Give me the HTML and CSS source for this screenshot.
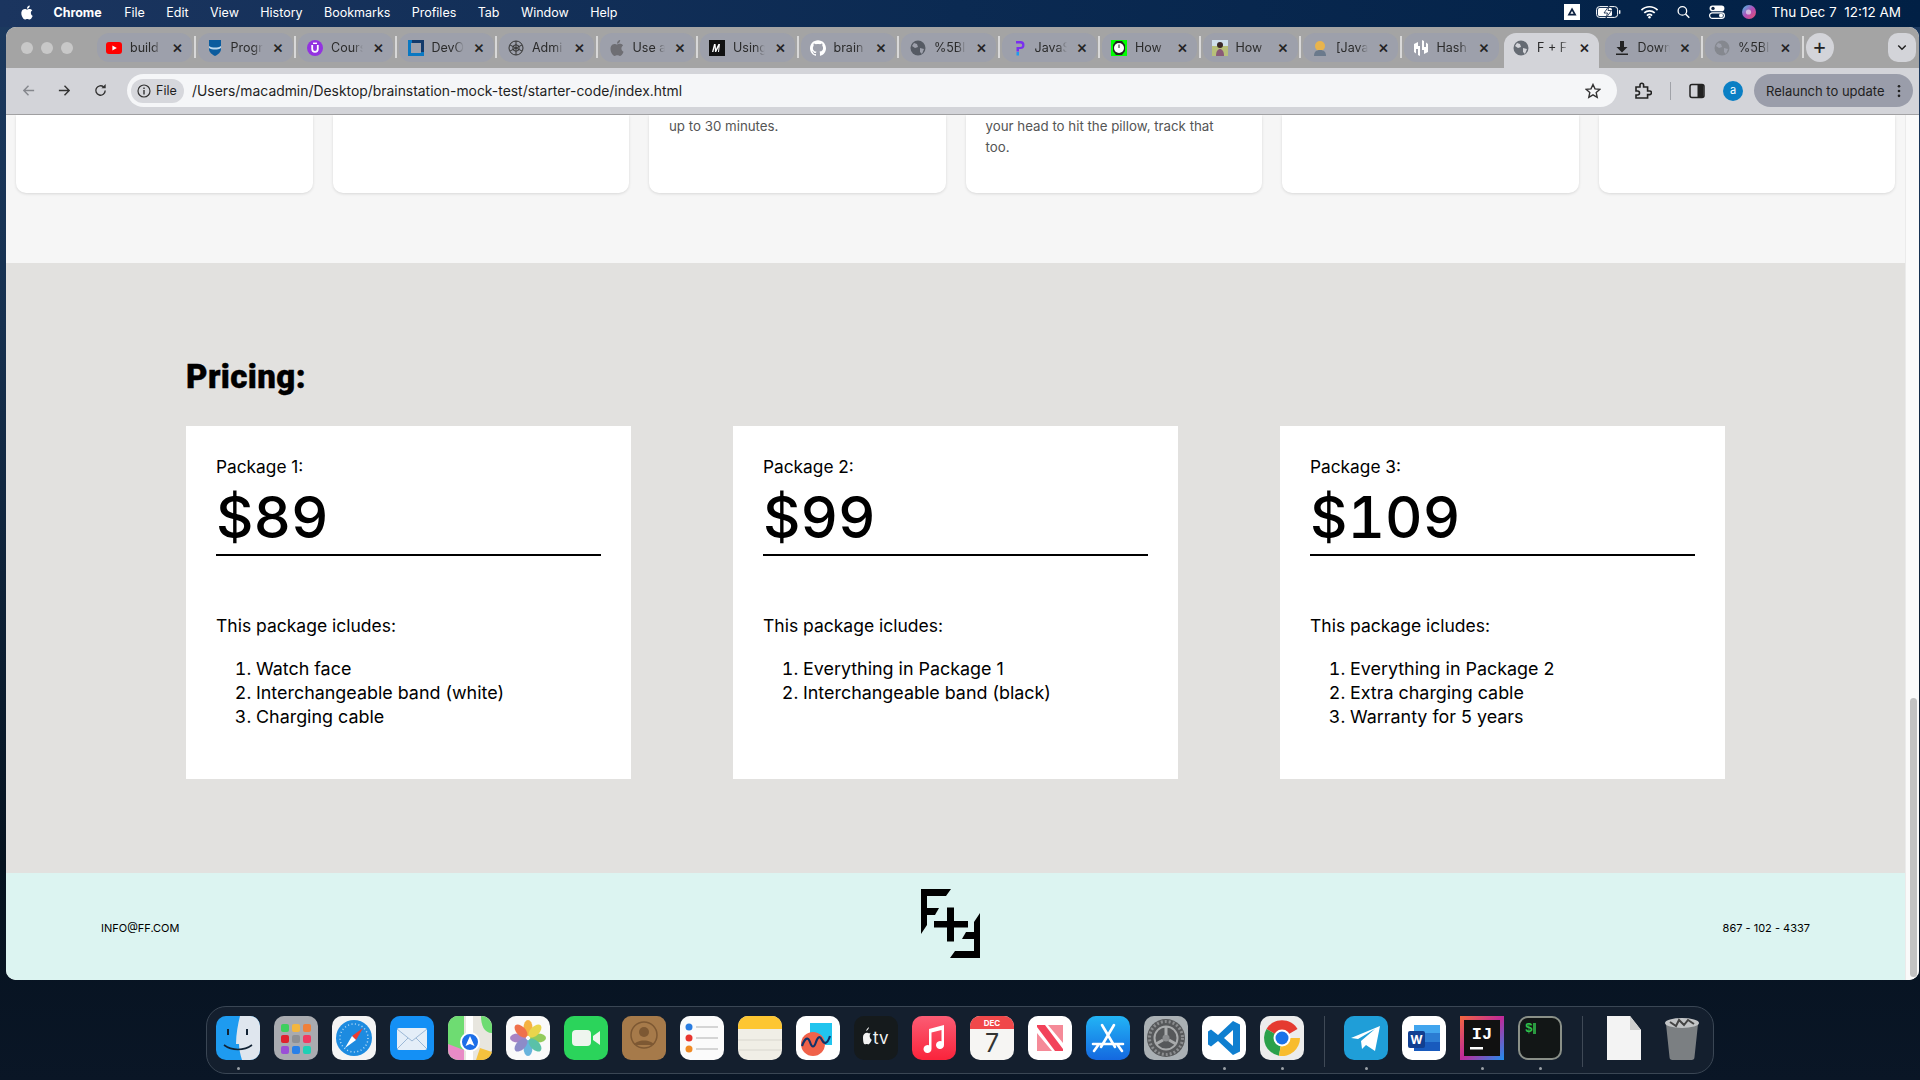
FILE: index.html
```html
<!DOCTYPE html>
<html lang="en">
<head>
    <meta charset="UTF-8">
    <meta name="viewport" content="width=device-width, initial-scale=1.0">
    <title>F + F</title>
    <link rel="stylesheet" href="styles.css">
</head>
<body>
    <!-- mac menu bar -->
    <header class="menubar">
        <div class="menu-left">
            <svg class="apple" viewBox="0 0 24 24"><path fill="#fff" d="M12.152 6.896c-.948 0-2.415-1.078-3.96-1.04-2.04.027-3.91 1.183-4.961 3.014-2.117 3.675-.546 9.103 1.519 12.09 1.013 1.454 2.208 3.09 3.792 3.039 1.52-.065 2.09-.987 3.935-.987 1.831 0 2.35.987 3.96.948 1.637-.026 2.676-1.48 3.676-2.948 1.156-1.688 1.636-3.325 1.662-3.415-.039-.013-3.182-1.221-3.22-4.857-.026-3.04 2.48-4.494 2.597-4.559-1.429-2.09-3.623-2.324-4.39-2.376-2-.156-3.675 1.09-4.61 1.09zM15.53 3.83c.843-1.012 1.4-2.427 1.245-3.83-1.207.052-2.662.805-3.532 1.818-.78.896-1.454 2.338-1.273 3.714 1.338.104 2.715-.688 3.559-1.701"/></svg>
            <span class="menu-app">Chrome</span>
            <span>File</span><span>Edit</span><span>View</span><span>History</span><span>Bookmarks</span><span>Profiles</span><span>Tab</span><span>Window</span><span>Help</span>
        </div>
        <div class="menu-right">
            <svg class="st-drive" viewBox="0 0 16 16"><rect width="16" height="16" fill="#fff"/><path d="M8 3.5l4.5 8h-9z" fill="#0a1f3f"/><path d="M8 7l1.6 2.8H6.4z" fill="#fff"/></svg>
            <svg class="st-batt" viewBox="0 0 25 12"><rect x=".6" y=".6" width="21" height="10.8" rx="3" fill="none" stroke="#fff" stroke-width="1"/><rect x="2" y="2" width="14" height="8" rx="1.5" fill="#fff"/><rect x="23" y="4" width="1.4" height="4" rx=".7" fill="#fff"/><path d="M13 0l-5 7h3.5L10 12l5.5-7.5H12z" fill="#fff" stroke="#0a2040" stroke-width=".8"/></svg>
            <svg class="st-wifi" viewBox="0 0 20 14"><path d="M1.5 5a12 12 0 0 1 17 0M4.5 8a8 8 0 0 1 11 0M7.3 10.8a4 4 0 0 1 5.4 0" fill="none" stroke="#fff" stroke-width="1.8"/><circle cx="10" cy="12.6" r="1.3" fill="#fff"/></svg>
            <svg class="st-search" viewBox="0 0 14 14"><circle cx="5.8" cy="5.8" r="4.6" fill="none" stroke="#fff" stroke-width="1.4"/><path d="M9.2 9.2l4 4" stroke="#fff" stroke-width="1.6"/></svg>
            <svg class="st-ctrl" viewBox="0 0 16 14"><rect x=".6" y=".6" width="14.8" height="5.6" rx="2.8" fill="#fff"/><circle cx="4" cy="3.4" r="1.7" fill="#0a2040"/><rect x=".6" y="7.8" width="14.8" height="5.6" rx="2.8" fill="none" stroke="#fff" stroke-width="1.2"/><circle cx="12" cy="10.6" r="2" fill="#fff"/></svg>
            <svg class="st-siri" viewBox="0 0 14 14"><defs><linearGradient id="siri" x1="0" y1="0" x2="1" y2="1"><stop offset="0" stop-color="#3fc4e8"/><stop offset=".5" stop-color="#b04fb8"/><stop offset="1" stop-color="#e8506a"/></linearGradient></defs><circle cx="7" cy="7" r="7" fill="url(#siri)"/><circle cx="6.5" cy="7" r="2.6" fill="#e5e0ee" opacity=".7"/></svg>
            <span class="clock">Thu Dec 7&nbsp;&nbsp;12:12 AM</span>
        </div>
    </header>

    <div class="window">
        <div class="tabstrip">
            <div class="lights"><i></i><i></i><i></i></div>
            <div class="tab"><svg class="fav" viewBox="0 0 16 16"><rect y="2" width="16" height="12" rx="3" fill="#f00"/><path d="M6.4 5.4v5.2L10.8 8z" fill="#fff"/></svg><span class="tab-title">build</span><b class="close">×</b></div>
            <i class="sep"></i>
            <div class="tab"><svg class="fav" viewBox="0 0 16 16"><path d="M2 0h12v9c0 3.5-3 5.5-6 7-3-1.5-6-3.500-6-7z" fill="#0b5c9e"/><path d="M2 6c3 2 9 2 12 0v2c-3 2-9 2-12 0z" fill="#bcd7ec"/></svg><span class="tab-title">Progr</span><b class="close">×</b></div>
            <i class="sep"></i>
            <div class="tab"><svg class="fav" viewBox="0 0 16 16"><circle cx="8" cy="8" r="8" fill="#9333e0"/><path d="M5.2 5v4a2.8 2.8 0 0 0 5.6 0V5" fill="none" stroke="#fff" stroke-width="1.8"/><rect x="6" y="2.6" width="4" height="1.4" fill="#fff"/></svg><span class="tab-title">Cours</span><b class="close">×</b></div>
            <i class="sep"></i>
            <div class="tab"><svg class="fav" viewBox="0 0 16 16"><rect width="16" height="16" fill="#0a78c2"/><rect x="4" y="0" width="12" height="3" fill="#123a6b"/><rect x="13" width="3" height="12" fill="#123a6b"/><rect x="3" y="3" width="10" height="10" fill="#9da0ab"/></svg><span class="tab-title">DevO</span><b class="close">×</b></div>
            <i class="sep"></i>
            <div class="tab"><svg class="fav" viewBox="0 0 16 16"><g fill="none" stroke="#333" stroke-width="1"><circle cx="8" cy="8" r="7"/><path d="M8 1v14M2 5l12 6M14 5L2 11"/><circle cx="8" cy="8" r="3.2"/></g></svg><span class="tab-title">Admi</span><b class="close">×</b></div>
            <i class="sep"></i>
            <div class="tab"><svg class="fav" viewBox="0 0 24 24"><path fill="#6e6e73" d="M12.152 6.896c-.948 0-2.415-1.078-3.96-1.04-2.04.027-3.91 1.183-4.961 3.014-2.117 3.675-.546 9.103 1.519 12.09 1.013 1.454 2.208 3.09 3.792 3.039 1.52-.065 2.09-.987 3.935-.987 1.831 0 2.35.987 3.96.948 1.637-.026 2.676-1.48 3.676-2.948 1.156-1.688 1.636-3.325 1.662-3.415-.039-.013-3.182-1.221-3.22-4.857-.026-3.04 2.48-4.494 2.597-4.559-1.429-2.09-3.623-2.324-4.39-2.376-2-.156-3.675 1.09-4.61 1.09zM15.53 3.83c.843-1.012 1.4-2.427 1.245-3.83-1.207.052-2.662.805-3.532 1.818-.78.896-1.454 2.338-1.273 3.714 1.338.104 2.715-.688 3.559-1.701"/></svg><span class="tab-title">Use a</span><b class="close">×</b></div>
            <i class="sep"></i>
            <div class="tab"><svg class="fav" viewBox="0 0 16 16"><rect width="16" height="16" fill="#111"/><path d="M3 12l2-8h1.6l.4 5 2.4-5H11l-1 8H9l.6-5-2.4 5H6l-.4-5-1.2 5z" fill="#fff"/></svg><span class="tab-title">Using</span><b class="close">×</b></div>
            <i class="sep"></i>
            <div class="tab"><svg class="fav" viewBox="0 0 24 24"><path fill="#fff" d="M12 .297c-6.63 0-12 5.373-12 12 0 5.303 3.438 9.8 8.205 11.385.6.113.82-.258.82-.577 0-.285-.01-1.04-.015-2.04-3.338.724-4.042-1.61-4.042-1.61C4.422 18.07 3.633 17.7 3.633 17.7c-1.087-.744.084-.729.084-.729 1.205.084 1.838 1.236 1.838 1.236 1.07 1.835 2.809 1.305 3.495.998.108-.776.417-1.305.76-1.605-2.665-.3-5.466-1.332-5.466-5.93 0-1.31.465-2.38 1.235-3.22-.135-.303-.54-1.523.105-3.176 0 0 1.005-.322 3.3 1.23.96-.267 1.98-.399 3-.405 1.02.006 2.04.138 3 .405 2.28-1.552 3.285-1.23 3.285-1.23.645 1.653.24 2.873.12 3.176.765.84 1.23 1.91 1.23 3.22 0 4.61-2.805 5.625-5.475 5.92.42.36.81 1.096.81 2.22 0 1.606-.015 2.896-.015 3.286 0 .315.21.69.825.57C20.565 22.092 24 17.592 24 12.297c0-6.627-5.373-12-12-12"/></svg><span class="tab-title">brain</span><b class="close">×</b></div>
            <i class="sep"></i>
            <div class="tab"><svg class="fav" viewBox="0 0 16 16"><circle cx="8" cy="8" r="7.5" fill="#555a63"/><path d="M4 3l3 1 1 3-3 1-3-2zM10 8l4 1-2 5-2-2z" fill="#9da0ab"/></svg><span class="tab-title">%5BI</span><b class="close">×</b></div>
            <i class="sep"></i>
            <div class="tab"><svg class="fav" viewBox="0 0 16 16"><path d="M5 1h4.5a4 4 0 0 1 0 8H8v2.500H5.500V7h4a1.500 1.500 0 0 0 0-3.500H5z" fill="#7a2ff0"/><rect x="5.5" y="12" width="2.5" height="3.5" fill="#1d9bf0"/></svg><span class="tab-title">JavaS</span><b class="close">×</b></div>
            <i class="sep"></i>
            <div class="tab"><svg class="fav" viewBox="0 0 16 16"><rect width="16" height="16" fill="#0f0"/><path d="M5 1h6l3 4v6l-3 4H5l-3-4V5z" fill="#222"/><circle cx="8" cy="8" r="5" fill="#fff"/><path d="M8 4.5V8" stroke="#222" stroke-width="1"/></svg><span class="tab-title">How</span><b class="close">×</b></div>
            <i class="sep"></i>
            <div class="tab"><svg class="fav" viewBox="0 0 16 16"><rect width="16" height="16" fill="#b7c07a"/><rect width="16" height="6" fill="#cfe0ea"/><circle cx="8" cy="5" r="3" fill="#3a2a28"/><path d="M4 16c0-5 2-7 4-7s4 2 4 7z" fill="#8a5a78"/></svg><span class="tab-title">How</span><b class="close">×</b></div>
            <i class="sep"></i>
            <div class="tab"><svg class="fav" viewBox="0 0 16 16"><circle cx="8" cy="6" r="5" fill="#e9b44c"/><path d="M2 16c0-4 2-6 6-6s6 2 6 6z" fill="#6b7a8c"/></svg><span class="tab-title">[Java</span><b class="close">×</b></div>
            <i class="sep"></i>
            <div class="tab"><svg class="fav" viewBox="0 0 16 16"><path d="M7 0v6H5V2L1 4v8l2 1.500V9h2v6l2 1zM9 0l2 1v6h2V2.500l2 1.500v8l-4 2v-4H9V16z" fill="#fff"/></svg><span class="tab-title">Hash</span><b class="close">×</b></div>
            <i class="sep sep-off"></i>
            <div class="tab tab-active"><svg class="fav" viewBox="0 0 16 16"><circle cx="8" cy="8" r="7.5" fill="#656b73"/><path d="M4 3l3 1 1 3-3 1-3-2zM10 8l4 1-2 5-2-2z" fill="#d3d4d9"/></svg><span class="tab-title">F + F</span><b class="close">×</b></div>
            <i class="sep sep-off"></i>
            <div class="tab"><svg class="fav" viewBox="0 0 16 16"><path d="M6 1h4v6h3.5L8 12.500 2.500 7H6zM2 13.500h12V15H2z" fill="#222"/></svg><span class="tab-title">Down</span><b class="close">×</b></div>
            <i class="sep"></i>
            <div class="tab"><svg class="fav" viewBox="0 0 16 16"><circle cx="8" cy="8" r="7.5" fill="#85888f"/><path d="M4 3l3 1 1 3-3 1-3-2zM10 8l4 1-2 5-2-2z" fill="#9da0ab"/></svg><span class="tab-title">%5BI</span><b class="close">×</b></div>
            <i class="sep"></i>
            <div class="newtab">+</div>
            <div class="tab-list"><svg viewBox="0 0 12 8"><path d="M1.5 1.5L6 6l4.5-4.5" fill="none" stroke="#222" stroke-width="1.8"/></svg></div>
        </div>

        <div class="toolbar">
            <svg class="nav" viewBox="0 0 16 16"><path d="M14 8H3M8 3L3 8l5 5" fill="none" stroke="#85878d" stroke-width="1.5"/></svg>
            <svg class="nav" viewBox="0 0 16 16"><path d="M2 8h11M8 3l5 5-5 5" fill="none" stroke="#333" stroke-width="1.5"/></svg>
            <svg class="nav" viewBox="0 0 16 16"><path d="M13 8a5 5 0 1 1-1.600-3.700" fill="none" stroke="#333" stroke-width="1.5"/><path d="M13.500 1v4.500H9z" fill="#333"/></svg>
            <div class="omnibox">
                <div class="chip"><svg class="info" viewBox="0 0 14 14"><circle cx="7" cy="7" r="6" fill="none" stroke="#333" stroke-width="1.2"/><rect x="6.3" y="6" width="1.4" height="4.5" fill="#333"/><rect x="6.3" y="3.5" width="1.4" height="1.5" fill="#333"/></svg>File</div>
                <span class="url">/Users/macadmin/Desktop/brainstation-mock-test/starter-code/index.html</span>
                <svg class="star" viewBox="0 0 16 16"><path d="M8 1.500l2 4.400 4.800.5-3.600 3.200 1 4.700L8 11.900l-4.200 2.400 1-4.700L1.200 6.400 6 5.900z" fill="none" stroke="#333" stroke-width="1.4"/></svg>
            </div>
            <svg class="tool tool-ext" viewBox="0 0 18 18"><path d="M2 5h4V3a1.800 1.800 0 0 1 3.600 0v2h4v4h2a1.800 1.800 0 0 1 0 3.600h-2V16H2v-3h1.500a2 2 0 0 0 0-4H2z" fill="none" stroke="#222" stroke-width="1.6"/></svg>
            <i class="tool-sep"></i>
            <svg class="tool tool-side" viewBox="0 0 16 16"><rect x="1" y="1.5" width="14" height="13" rx="2" fill="none" stroke="#222" stroke-width="1.5"/><rect x="8.5" y="2" width="6" height="12" fill="#222"/></svg>
            <div class="avatar">a</div>
            <div class="relaunch">Relaunch to update<svg class="dots" viewBox="0 0 4 16"><circle cx="2" cy="2.5" r="1.5"/><circle cx="2" cy="8" r="1.5"/><circle cx="2" cy="13.5" r="1.5"/></svg></div>
        </div>

        <div class="viewport">
            <main class="page">
                <section class="features">
                    <div class="feature"></div>
                    <div class="feature"></div>
                    <div class="feature"><p>up to 30 minutes.</p></div>
                    <div class="feature"><p>your head to hit the pillow, track that too.</p></div>
                    <div class="feature"></div>
                    <div class="feature"></div>
                </section>

                <section class="pricing">
                    <h2>Pricing:</h2>
                    <div class="packages">
                        <div class="package">
                            <p class="package-name">Package 1:</p>
                            <p class="package-price">$89</p>
                            <p class="package-intro">This package icludes:</p>
                            <ol>
                                <li>Watch face</li>
                                <li>Interchangeable band (white)</li>
                                <li>Charging cable</li>
                            </ol>
                        </div>
                        <div class="package">
                            <p class="package-name">Package 2:</p>
                            <p class="package-price">$99</p>
                            <p class="package-intro">This package icludes:</p>
                            <ol>
                                <li>Everything in Package 1</li>
                                <li>Interchangeable band (black)</li>
                            </ol>
                        </div>
                        <div class="package">
                            <p class="package-name">Package 3:</p>
                            <p class="package-price">$109</p>
                            <p class="package-intro">This package icludes:</p>
                            <ol>
                                <li>Everything in Package 2</li>
                                <li>Extra charging cable</li>
                                <li>Warranty for 5 years</li>
                            </ol>
                        </div>
                    </div>
                </section>

                <footer class="footer">
                    <span>INFO@FF.COM</span>
                    <svg class="logo" viewBox="0 0 59 69">
                        <path d="M0 0h30l-5 7H6v29l-6 9z"/>
                        <path d="M6 19h12l-4 7H6z"/>
                        <path d="M59 69H29l5-7h19V33l6-9z"/>
                        <path d="M53 50H41l4-7h8z"/>
                        <path d="M13 32h34v6.500H13zM26 18.500h7v34h-7z"/>
                    </svg>
                    <span>867 - 102 - 4337</span>
                </footer>
            </main>
            <div class="scrollbar"><div class="thumb"></div></div>
        </div>
    </div>

    <div class="dock">
        <div class="dock-item"><svg viewBox="0 0 44 44"><rect width="44" height="44" rx="10" fill="#1e9bf0"/><path d="M24 0h10a10 10 0 0 1 10 10v24a10 10 0 0 1-10 10H26c-2-6-3-12-3-16h-3c0-10 2-20 4-28z" fill="#dfe6ee"/><path d="M12 13v6M31 13v6" stroke="#123" stroke-width="2"/><path d="M8 29c8 6 20 6 28 0" fill="none" stroke="#123" stroke-width="1.6"/></svg><i class="dot"></i></div>
        <div class="dock-item"><svg viewBox="0 0 44 44"><rect width="44" height="44" rx="10" fill="#a9abb0"/><g><rect x="7" y="8" width="8" height="8" rx="2" fill="#3ecf5e"/><rect x="18" y="8" width="8" height="8" rx="2" fill="#f4b63f"/><rect x="29" y="8" width="8" height="8" rx="2" fill="#f0803a"/><rect x="7" y="19" width="8" height="8" rx="2" fill="#e0222e"/><rect x="18" y="19" width="8" height="8" rx="2" fill="#8e9095"/><rect x="29" y="19" width="8" height="8" rx="2" fill="#ef3a62"/><rect x="7" y="30" width="8" height="8" rx="2" fill="#9a4fd6"/><rect x="18" y="30" width="8" height="8" rx="2" fill="#2a80e8"/><rect x="29" y="30" width="8" height="8" rx="2" fill="#1fd0b5"/></g></svg><i class="dot dot-off"></i></div>
        <div class="dock-item"><svg viewBox="0 0 44 44"><rect width="44" height="44" rx="10" fill="#f4f4f4"/><circle cx="22" cy="22" r="18" fill="#1d8be0"/><circle cx="22" cy="22" r="14" fill="none" stroke="#b7dcf6" stroke-width="1.5" stroke-dasharray="1 2.5"/><path d="M31 12L24 24l-4-4z" fill="#ee3b30"/><path d="M13 32l7-12 4 4z" fill="#fff"/></svg><i class="dot dot-off"></i></div>
        <div class="dock-item"><svg viewBox="0 0 44 44"><rect width="44" height="44" rx="10" fill="#1490f5"/><rect x="7" y="12" width="30" height="22" rx="2" fill="#e4eef8"/><path d="M7 13l15 12 15-12M7 33l11-11M37 33L26 22" fill="none" stroke="#9bb8d6" stroke-width="1"/></svg><i class="dot dot-off"></i></div>
        <div class="dock-item"><svg viewBox="0 0 44 44"><rect width="44" height="44" rx="10" fill="#e8e6df"/><path d="M0 10a10 10 0 0 1 10-10h6v44h-6A10 10 0 0 1 0 34z" fill="#6edc72"/><path d="M0 28l16 6v10h-6A10 10 0 0 1 0 34z" fill="#e88bc6"/><path d="M28 44l4-12 12 4a10 10 0 0 1-10 8z" fill="#f5c23e"/><path d="M18 0h7v44h-7z" fill="#fff"/><path d="M33 0a11 11 0 0 1 11 11v6c-8 0-11-8-11-17z" fill="#6edc72"/><circle cx="22" cy="26" r="9" fill="#1c6ee8" stroke="#fff" stroke-width="2"/><path d="M22 20l4.5 10-4.500-2-4.500 2z" fill="#fff"/></svg><i class="dot dot-off"></i></div>
        <div class="dock-item"><svg viewBox="0 0 44 44"><rect width="44" height="44" rx="10" fill="#fafafa"/><g opacity=".85"><ellipse cx="22" cy="12" rx="4.5" ry="8" fill="#f5a623"/><ellipse cx="22" cy="32" rx="4.5" ry="8" fill="#4fa8d8"/><ellipse cx="12" cy="22" rx="8" ry="4.5" fill="#9a6fbb"/><ellipse cx="32" cy="22" rx="8" ry="4.5" fill="#82c341"/><ellipse cx="15" cy="15" rx="4.5" ry="8" fill="#ee5a2e" transform="rotate(-45 15 15)"/><ellipse cx="29" cy="15" rx="4.5" ry="8" fill="#e8cf2e" transform="rotate(45 29 15)"/><ellipse cx="15" cy="29" rx="4.5" ry="8" fill="#7a78c0" transform="rotate(45 15 29)"/><ellipse cx="29" cy="29" rx="4.5" ry="8" fill="#3fb89a" transform="rotate(-45 29 29)"/></g></svg><i class="dot dot-off"></i></div>
        <div class="dock-item"><svg viewBox="0 0 44 44"><rect width="44" height="44" rx="10" fill="#2bd45b"/><rect x="8" y="14" width="19" height="16" rx="4" fill="#eef5ee"/><path d="M29 20l7-5v14l-7-5z" fill="#eef5ee"/></svg><i class="dot dot-off"></i></div>
        <div class="dock-item"><svg viewBox="0 0 44 44"><rect width="44" height="44" rx="9" fill="#a67a4a"/><circle cx="22" cy="19" r="13" fill="none" stroke="#7d5833" stroke-width="1.5"/><circle cx="22" cy="16" r="5" fill="#7d5833"/><path d="M12 29c2-6 18-6 20 0" fill="#7d5833"/></svg><i class="dot dot-off"></i></div>
        <div class="dock-item"><svg viewBox="0 0 44 44"><rect width="44" height="44" rx="10" fill="#fbfbfb"/><circle cx="9" cy="11" r="3.5" fill="#2a7de1"/><circle cx="9" cy="22" r="3.5" fill="#e8352e"/><circle cx="9" cy="33" r="3.5" fill="#f08a24"/><path d="M16 11h22M16 22h22M16 33h22" stroke="#c9c9c9" stroke-width="1.5"/></svg><i class="dot dot-off"></i></div>
        <div class="dock-item"><svg viewBox="0 0 44 44"><rect width="44" height="44" rx="10" fill="#f0eee6"/><path d="M0 10a10 10 0 0 1 10-10h24a10 10 0 0 1 10 10v3H0z" fill="#fdc632"/><path d="M0 24h44M0 34h44" stroke="#d8d6ce" stroke-width="1"/></svg><i class="dot dot-off"></i></div>
        <div class="dock-item"><svg viewBox="0 0 44 44"><rect width="44" height="44" rx="10" fill="#fff"/><rect x="14" y="7" width="22" height="22" fill="#20c4ee"/><circle cx="17" cy="28" r="12" fill="#f0624a"/><path d="M6 30c3-8 6-10 8-4s4 6 6 0 4-6 6-2 5 5 8-4" fill="none" stroke="#10336a" stroke-width="2.2"/></svg><i class="dot dot-off"></i></div>
        <div class="dock-item"><svg viewBox="0 0 44 44"><rect width="44" height="44" rx="10" fill="#151a1c"/><path d="M12 15c1-3 3-4 3-4-.2 2-1.500 3.500-3 4zM9 21c0-3 3-5 5-4 1 .5 2 .5 3-.2-2 2-1.500 6 .8 7-1 3-3 5-4 4.500-1.500-.8-2-.2-3 0-1.500 0-1.800-4.300-1.800-7.300z" fill="#f2f2f2"/><text class="tv" x="19" y="28">tv</text></svg><i class="dot dot-off"></i></div>
        <div class="dock-item"><svg viewBox="0 0 44 44"><defs><linearGradient id="music" x1="0" y1="0" x2="0" y2="1"><stop offset="0" stop-color="#fb5c74"/><stop offset="1" stop-color="#fa233b"/></linearGradient></defs><rect width="44" height="44" rx="10" fill="url(#music)"/><path d="M17 13l15-4v20a4 4 0 1 1-2.500-3.700V14l-10 2.600V33a4 4 0 1 1-2.500-3.700z" fill="#fff"/></svg><i class="dot dot-off"></i></div>
        <div class="dock-item"><svg viewBox="0 0 44 44"><rect width="44" height="44" rx="10" fill="#f6f5f3"/><path d="M0 10a10 10 0 0 1 10-10h24a10 10 0 0 1 10 10v3H0z" fill="#f0484a"/><text class="cal-m" x="22" y="10">DEC</text><text class="cal-d" x="22" y="36">7</text></svg><i class="dot dot-off"></i></div>
        <div class="dock-item"><svg viewBox="0 0 44 44"><rect width="44" height="44" rx="10" fill="#fff"/><path d="M9 9h8l18 24v2h-8L9 11z" fill="#f2425a"/><path d="M20 9h15v18zM9 17l15 18H9z" fill="#f58a98"/></svg><i class="dot dot-off"></i></div>
        <div class="dock-item"><svg viewBox="0 0 44 44"><defs><linearGradient id="store" x1="0" y1="0" x2="0" y2="1"><stop offset="0" stop-color="#22b4f5"/><stop offset="1" stop-color="#1468e0"/></linearGradient></defs><rect width="44" height="44" rx="10" fill="url(#store)"/><path d="M16 9l13 22M28 9L15 31M7 28h30M31 28l5 7M13 28l-5 7" fill="none" stroke="#fff" stroke-width="2.6" stroke-linecap="round"/></svg><i class="dot dot-off"></i></div>
        <div class="dock-item"><svg viewBox="0 0 44 44"><rect width="44" height="44" rx="10" fill="#aab0b4"/><circle cx="22" cy="22" r="19" fill="#56585a"/><circle cx="22" cy="22" r="16.500" fill="none" stroke="#8b8d8f" stroke-width="3" stroke-dasharray="2 2"/><circle cx="22" cy="22" r="11.500" fill="none" stroke="#a8aaab" stroke-width="2"/><circle cx="22" cy="22" r="3.500" fill="#8b8d8f"/><path d="M22 11v8M12 28l7-4M32 28l-7-4" stroke="#a8aaab" stroke-width="3"/></svg><i class="dot dot-off"></i></div>
        <div class="dock-item"><svg viewBox="0 0 44 44"><rect width="44" height="44" rx="10" fill="#fff"/><path d="M31 5l7 3.500v27L31 39 16 25l-7 5.500-3-2V15.500l3-2L16 19zM31 14l-9 8 9 8z" fill="#0f7fd0"/></svg><i class="dot"></i></div>
        <div class="dock-item"><svg viewBox="0 0 44 44"><rect width="44" height="44" rx="10" fill="#ececec"/><path d="M22 22L6.500 13a18 18 0 0 1 31 0z" fill="#e53a30"/><path d="M22 22l-15.500-9A18 18 0 0 0 19 39.800z" fill="#2aa14a"/><path d="M22 22h18A18 18 0 0 1 19 39.800z" fill="#f8bc2e"/><circle cx="22" cy="22" r="8.500" fill="#fff"/><circle cx="22" cy="22" r="6.500" fill="#1b73e8"/></svg><i class="dot"></i></div>
        <i class="dock-sep"></i>
        <div class="dock-item"><svg viewBox="0 0 44 44"><rect width="44" height="44" rx="10" fill="#1f9ed8"/><path d="M7 22L36 10 31 35l-9-6-4 4-1-8 14-12-17 10z" fill="#fff"/></svg><i class="dot"></i></div>
        <div class="dock-item"><svg viewBox="0 0 44 44"><rect width="44" height="44" rx="10" fill="#fff"/><rect x="12" y="9" width="26" height="8" fill="#41a5ee"/><rect x="12" y="17" width="26" height="9" fill="#2b7cd3"/><rect x="12" y="26" width="26" height="9" fill="#185abd"/><rect x="6" y="15" width="17" height="17" rx="2" fill="#103f91"/><text class="word" x="14.5" y="28">W</text></svg><i class="dot dot-off"></i></div>
        <div class="dock-item"><svg viewBox="0 0 44 44"><defs><linearGradient id="ij" x1="0" y1="0" x2="1" y2="1"><stop offset="0" stop-color="#f5683c"/><stop offset=".5" stop-color="#c02a9a"/><stop offset="1" stop-color="#1d8ff0"/></linearGradient></defs><rect width="44" height="44" fill="url(#ij)"/><rect x="4" y="4" width="36" height="36" fill="#111"/><text class="ij" x="22" y="23">IJ</text><rect x="10" y="31" width="13" height="2.5" fill="#fff"/></svg><i class="dot"></i></div>
        <div class="dock-item"><svg viewBox="0 0 44 44"><rect x="1" y="1" width="42" height="42" rx="9" fill="#121616" stroke="#8a9088" stroke-width="2"/><text class="term" x="7" y="16">$</text><rect x="15" y="7" width="3" height="11" fill="#2a9a40"/></svg><i class="dot"></i></div>
        <i class="dock-sep"></i>
        <div class="dock-item"><svg viewBox="0 0 44 44"><path d="M5 0h23l11 14v30H5z" fill="#f3f3f3"/><path d="M28 0l11 14H28z" fill="#cfcfcf"/></svg><i class="dot dot-off"></i></div>
        <div class="dock-item"><svg viewBox="0 0 44 44"><path d="M6 8h32l-3.500 33a3 3 0 0 1-3 3h-19a3 3 0 0 1-3-3z" fill="#7b7f82"/><ellipse cx="22" cy="7" rx="17" ry="5" fill="#c2c4c6"/><path d="M10 6l6 4 3-6 5 5 4-5 6 4" fill="none" stroke="#444" stroke-width="2"/></svg><i class="dot dot-off"></i></div>
    </div>
</body>
</html>
```

FILE: styles.css
```css
* {
    box-sizing: border-box;
}
html, body {
    height: 100%;
}
body {
    margin: 0;
    width: 1920px;
    height: 1080px;
    overflow: hidden;
    font-family: Inter, "Liberation Sans", sans-serif;
    color: #000;
    background: linear-gradient(to bottom, #1c3a60 0%, #16304f 30%, #05121f 80%, #0a1626 100%);
}

/* menu bar */
.menubar {
    height: 27px;
    display: flex;
    justify-content: space-between;
    align-items: center;
    padding: 0 19px 3px 20px;
    color: #fff;
    font-size: 12.5px;
    background: linear-gradient(to right, #1b355f, #0b2a52 50%, #012045);
}
.menu-left {
    display: flex;
    align-items: center;
    gap: 21.4px;
}
.apple {
    width: 14px;
    height: 15px;
    margin-right: -2px;
}
.menu-app {
    font-weight: 700;
    margin-right: 1px;
}
.menu-right {
    display: flex;
    align-items: center;
}
.menu-right svg {
    display: block;
}
.clock {
    font-size: 13.5px;
}
.st-drive {
    width: 16px;
    height: 16px;
    margin-right: 16px;
}
.st-batt {
    width: 25px;
    height: 12px;
    margin-right: 19px;
}
.st-wifi {
    width: 19px;
    height: 14px;
    margin-right: 18px;
}
.st-search {
    width: 13px;
    height: 14px;
    margin-right: 19px;
}
.st-ctrl {
    width: 16px;
    height: 14px;
    margin-right: 17px;
}
.st-siri {
    width: 14px;
    height: 14px;
    margin-right: 16px;
}

/* browser window */
.window {
    width: 1913px;
    height: 953px;
    margin-left: 6px;
    border-radius: 10px;
    overflow: hidden;
    display: flex;
    flex-direction: column;
    background: #fff;
}
.tabstrip {
    height: 41px;
    flex: none;
    background: #a4a4a4;
    display: flex;
    align-items: flex-start;
    padding-top: 6px;
}
.lights {
    width: 91px;
    display: flex;
    gap: 8px;
    padding: 9px 0 0 15px;
}
.lights i {
    width: 12px;
    height: 12px;
    border-radius: 50%;
    background: #c8c8c8;
}
.tab {
    width: 95px;
    height: 29px;
    flex: none;
    display: flex;
    align-items: center;
    padding: 0 9px;
    border-radius: 12px;
    background: #9da0ab;
    font-size: 12.5px;
    color: #2b2b2b;
}
.tab-active {
    height: 35px;
    padding-bottom: 6px;
    border-radius: 12px 12px 0 0;
    background: #d3d4d9;
}
.fav {
    width: 16px;
    height: 16px;
    flex: none;
}
.tab-title {
    width: 32px;
    margin-left: 8px;
    white-space: nowrap;
    overflow: hidden;
    -webkit-mask-image: linear-gradient(to right, #000 70%, transparent);
    mask-image: linear-gradient(to right, #000 70%, transparent);
}
.close {
    margin-left: auto;
    font-size: 17px;
    font-weight: 500;
    line-height: 1;
    color: #222;
}
.sep {
    width: 2px;
    height: 22px;
    margin: 3px 1.75px 0;
    flex: none;
    background: #d8d8d8;
}
.sep-off {
    background: transparent;
}
.newtab {
    width: 28px;
    height: 29px;
    border-radius: 50%;
    background: #d3d4d9;
    font-size: 22px;
    line-height: 27px;
    text-align: center;
    color: #222;
}
.tab-list {
    width: 28px;
    height: 29px;
    margin-left: 54px;
    border-radius: 10px;
    background: #d3d4d9;
    display: flex;
    align-items: center;
    justify-content: center;
}
.tab-list svg {
    width: 10px;
    height: 7px;
}
.toolbar {
    height: 47px;
    flex: none;
    display: flex;
    align-items: center;
    padding: 0 0 1px 15px;
    background: #d3d4d9;
    border-bottom: 1px solid #a2a2a4;
}
.nav {
    width: 15px;
    height: 15px;
    margin-right: 21px;
    flex: none;
}
.omnibox {
    width: 1490px;
    height: 33px;
    margin-left: -2px;
    flex: none;
    display: flex;
    align-items: center;
    padding: 0 16px 0 4px;
    border-radius: 17px;
    background: #f5f6f8;
    font-size: 13.9px;
    color: #1f1f1f;
}
.chip {
    width: 53px;
    height: 24px;
    display: flex;
    align-items: center;
    gap: 5px;
    padding-left: 6px;
    border-radius: 12px;
    background: #d6d7dc;
    font-size: 12.5px;
}
.info {
    width: 14px;
    height: 14px;
}
.url {
    margin-left: 8px;
}
.star {
    width: 16px;
    height: 16px;
    margin-left: auto;
}
.tool {
    flex: none;
}
.tool-ext {
    width: 18px;
    height: 18px;
    margin-left: 17px;
}
.tool-sep {
    width: 1px;
    height: 18px;
    margin-left: 18px;
    background: #a0a2a8;
}
.tool-side {
    width: 16px;
    height: 16px;
    margin-left: 18px;
}
.avatar {
    width: 20px;
    height: 20px;
    margin-left: 18px;
    border-radius: 50%;
    background: #0a7fc4;
    color: #fff;
    font-size: 11px;
    line-height: 19px;
    text-align: center;
}
.relaunch {
    width: 159px;
    height: 33px;
    margin-left: 11px;
    display: flex;
    align-items: center;
    justify-content: space-between;
    padding: 0 12px;
    border-radius: 17px;
    background: #9a9daa;
    font-size: 13px;
    color: #1f1f1f;
}
.dots {
    width: 4px;
    height: 14px;
    fill: #222;
}

/* page */
.viewport {
    flex: 1;
    display: flex;
    min-height: 0;
}
.page {
    width: 1899px;
    flex: none;
    display: flex;
    flex-direction: column;
}
.scrollbar {
    flex: 1;
    padding: 583px 2px 3px 4px;
    background: #fafafa;
    border-left: 1px solid #ebebeb;
}
.thumb {
    height: 279px;
    border-radius: 4px;
    background: #c2c2c2;
}
.features {
    height: 148px;
    flex: none;
    display: flex;
    gap: 20px;
    padding: 0 10px 70px;
    background: #f6f6f6;
}
.feature {
    width: 297.5px;
    padding: 1px 24px 0 20px;
    background: #fff;
    border-radius: 0 0 10px 10px;
    box-shadow: 0 1px 3px rgba(0, 0, 0, 0.12);
}
.feature p {
    margin: 0;
    font-size: 13.3px;
    line-height: 21px;
    color: #555;
}
.pricing {
    height: 610px;
    flex: none;
    padding: 94px 180px 0;
    background: #e2e1df;
}
.pricing h2 {
    margin: 0 0 29px;
    font-family: Roboto, sans-serif;
    font-size: 33px;
    font-weight: 900;
    letter-spacing: 0.4px;
    line-height: 40px;
    -webkit-text-stroke: 0.4px #000;
}
.packages {
    display: flex;
    justify-content: space-between;
}
.package {
    width: 445px;
    padding: 30px 30px 50px;
    background: #fff;
}
.package-name {
    margin: 0 0 2px;
    font-size: 17.3px;
    line-height: 22px;
}
.package-price {
    margin: 0;
    padding: 2px 0;
    border-bottom: 2px solid #000;
    font-size: 58px;
    font-weight: 500;
    font-feature-settings: "tnum";
    line-height: 70px;
}
.package-intro {
    margin: 58px 0 19px;
    font-size: 17.5px;
    line-height: 24px;
}
.package ol {
    margin: 0;
    padding-left: 40px;
    font-size: 17.9px;
    line-height: 24px;
}
.footer {
    flex: 1;
    display: flex;
    justify-content: space-between;
    align-items: center;
    padding: 2px 95px 0;
    background: #dcf4f1;
    font-size: 11px;
}
.logo {
    width: 59px;
    height: 69px;
    margin: 0 1px 9px 0;
}

/* dock */
.dock {
    width: 1508px;
    height: 68px;
    margin: 26px 0 0 206px;
    display: flex;
    align-items: flex-start;
    gap: 14px;
    padding: 9px 9px 0;
    background: #141f2e;
    border: 1px solid #3a4654;
    border-radius: 20px;
}
.dock-item {
    width: 44px;
    flex: none;
    display: flex;
    flex-direction: column;
    align-items: center;
}
.dock-item svg {
    width: 44px;
    height: 44px;
}
.dot {
    width: 3px;
    height: 3px;
    margin-top: 7px;
    border-radius: 50%;
    background: #9aa0a6;
}
.dot-off {
    visibility: hidden;
}
.dock-sep {
    width: 1px;
    height: 51px;
    margin: 0 5.5px;
    flex: none;
    background: #3f4956;
}
.tv {
    font-size: 17px;
    fill: #f2f2f2;
}
.cal-m {
    font-size: 8px;
    font-weight: 700;
    fill: #fff;
    text-anchor: middle;
}
.cal-d {
    font-size: 25px;
    fill: #333;
    text-anchor: middle;
}
.word {
    font-size: 12px;
    font-weight: 700;
    fill: #fff;
    text-anchor: middle;
}
.ij {
    font-family: "Liberation Mono", monospace;
    font-size: 17px;
    font-weight: 700;
    fill: #fff;
    text-anchor: middle;
}
.term {
    font-family: "Liberation Mono", monospace;
    font-size: 13px;
    font-weight: 700;
    fill: #2fc24a;
}
```
